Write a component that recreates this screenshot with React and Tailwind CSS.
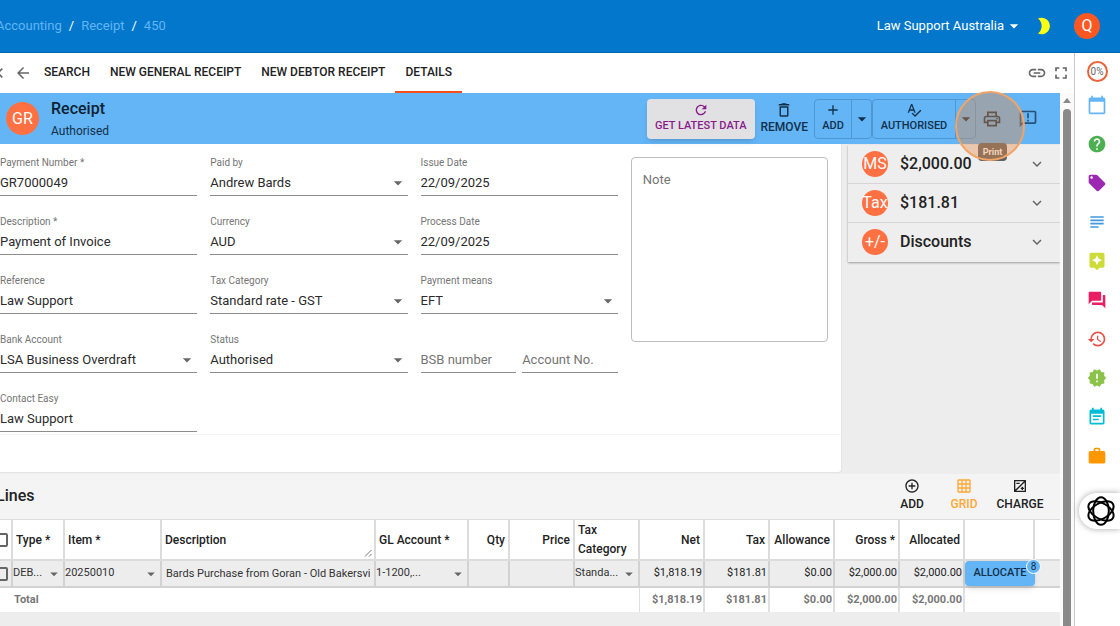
import React from 'react';
import {
    MdAdd,
    MdAddCircleOutline,
    MdArrowBack,
    MdArrowDropDown,
    MdAssistant,
    MdCalendarToday,
    MdChevronLeft,
    MdEventNote,
    MdExpandMore,
    MdForum,
    MdFullscreen,
    MdGridOn,
    MdHelp,
    MdHistory,
    MdLink,
    MdLocalOffer,
    MdNewReleases,
    MdOutlineAnnouncement,
    MdOutlineDelete,
    MdOutlinePrint,
    MdRefresh,
    MdSpellcheck,
    MdSubject,
    MdWork,
} from 'react-icons/md';

const tabs = ['Search', 'New General Receipt', 'New Debtor Receipt', 'Details'];

const summary = [
    { badge: 'MS', title: '$2,000.00' },
    { badge: 'Tax', title: '$181.81' },
    { badge: '+/-', title: 'Discounts' },
];

const railLinks = [
    { name: 'Calendar', icon: MdCalendarToday, color: 'text-[#64b5f6]' },
    { name: 'Help', icon: MdHelp, color: 'text-[#4caf50]' },
    { name: 'Tags', icon: MdLocalOffer, color: 'text-[#9c27b0]' },
    { name: 'Notes', icon: MdSubject, color: 'text-[#4299dd]' },
    { name: 'Assistant', icon: MdAssistant, color: 'text-[#cddc39]' },
    { name: 'Messages', icon: MdForum, color: 'text-[#e91e63]' },
    { name: 'History', icon: MdHistory, color: 'text-[#ea4f45]' },
    { name: 'Releases', icon: MdNewReleases, color: 'text-[#8bc34a]' },
    { name: 'Events', icon: MdEventNote, color: 'text-[#00bcd4]' },
    { name: 'Work', icon: MdWork, color: 'text-[#ff9800]' },
];

const amounts = [
    { label: 'Net', value: '$1,818.19' },
    { label: 'Tax', value: '$181.81' },
    { label: 'Allowance', value: '$0.00' },
    { label: 'Gross *', value: '$2,000.00' },
    { label: 'Allocated', value: '$2,000.00' },
];

const TextField = ({ id, label, value }) => (
    <div className="flex h-[59px] flex-col">
        <label htmlFor={id} className="h-4 text-[10px] leading-4 text-[#757575]">{label}</label>
        <input
            id={id}
            defaultValue={value}
            className="h-[25px] w-full border-b border-[#8c8c8c] bg-transparent pb-0.5 text-[13px] text-[#2b2b2b] outline-none"
        />
    </div>
);

const SelectField = ({ id, label, value }) => (
    <div className="flex h-[59px] flex-col">
        <label htmlFor={id} className="h-4 text-[10px] leading-4 text-[#757575]">{label}</label>
        <div className="relative">
            <select
                id={id}
                className="block h-[25px] w-full appearance-none border-b border-[#8c8c8c] bg-transparent pr-6 text-[13px] text-[#2b2b2b] outline-none"
            >
                <option>{value}</option>
            </select>
            <MdArrowDropDown className="pointer-events-none absolute top-0.5 right-0 size-5 text-[#666]" />
        </div>
    </div>
);

const EmptyField = ({ label }) => (
    <input
        aria-label={label}
        placeholder={label}
        className="mt-4 h-[25px] w-full min-w-0 border-b border-[#8c8c8c] bg-transparent pb-0.5 text-[13px] outline-none placeholder:text-[#757575]"
    />
);

const CellSelect = ({ label, value }) => (
    <div className="relative">
        <select
            aria-label={label}
            className="block h-[25px] w-full appearance-none truncate bg-transparent pr-4 text-[11px] text-[#333] outline-none"
        >
            <option>{value}</option>
        </select>
        <MdArrowDropDown className="pointer-events-none absolute top-1 right-0 size-4.5 text-[#666]" />
    </div>
);

const RowCheckbox = ({ label }) => (
    <input
        type="checkbox"
        aria-label={label}
        className="-ml-1.5 block size-[14px] appearance-none rounded-xs border-2 border-[#666] bg-transparent"
    />
);

const TopBar = () => (
    <header className="flex h-[53px] shrink-0 items-center justify-between border-b border-[#0567ae] bg-[#0277cb] pr-5 text-[13px]">
        <nav className="-ml-1 flex gap-[7px] text-[#64b5f6]">
            <a href="#accounting">Accounting</a>
            <span className="text-white">/</span>
            <a href="#receipt">Receipt</a>
            <span className="text-white">/</span>
            <a href="#450">450</a>
        </nav>
        <div className="flex items-center">
            <button type="button" className="flex items-center text-white">
                Law Support Australia
                <MdArrowDropDown className="size-5" />
            </button>
            <button type="button" aria-label="Dark mode" className="ml-3">
                <svg className="h-[18px] w-4" viewBox="0 0 16 18">
                    <path d="M2 1.500 A8.300 8.300 0 1 1 2 16.500 A9.500 9.500 0 0 0 2 1.500 Z" fill="#ffff14" />
                </svg>
            </button>
            <button type="button" className="ml-5.5 size-[26px] rounded-full bg-[#ff5722] text-base text-white">Q</button>
        </div>
    </header>
);

const TabBar = () => (
    <div className="flex h-10 shrink-0 items-center bg-white pr-[3px] text-[#666]">
        <MdChevronLeft className="-ml-2.5 size-5" />
        <button type="button" aria-label="Back" className="mr-0.5 ml-1"><MdArrowBack className="size-[18px]" /></button>
        <nav className="flex h-full flex-1 text-xs font-medium text-[#222] uppercase">
            {tabs.map((tab) => (
                <a
                    key={tab}
                    href={`#${tab}`}
                    className={`flex items-center border-b-2 px-2.5 ${tab === 'Details' ? 'border-[#f4511e]' : 'border-transparent'}`}
                >
                    {tab}
                </a>
            ))}
        </nav>
        <button type="button" aria-label="Copy link" className="mr-1"><MdLink className="size-5" /></button>
        <button type="button" aria-label="Full screen"><MdFullscreen className="size-5" /></button>
    </div>
);

const action = 'flex flex-col items-center justify-center pb-0.5 leading-4 font-medium uppercase';

const TitleBar = () => (
    <div className="relative z-10 flex h-[51px] shrink-0 items-center bg-[#64b5f6] text-[#12304a]">
        <div className="ml-1.5 flex size-[33px] items-center justify-center rounded-full bg-[#ff7043] text-base text-white">GR</div>
        <div className="ml-3 flex-1">
            <h1 className="text-base leading-5 font-medium text-[#0d2233]">Receipt</h1>
            <p className="mt-1 text-xs leading-4">Authorised</p>
        </div>
        <button type="button" className={`${action} h-10 rounded-sm bg-[#e1e1e3] px-2 text-[11px] text-[#8a1a8a] shadow-md`}>
            <MdRefresh className="size-4" />
            Get Latest Data
        </button>
        <button type="button" className={`${action} mx-1.5 h-10 text-xs`}>
            <MdOutlineDelete className="size-[18px]" />
            Remove
        </button>
        <div className="flex h-10 rounded-sm border border-[#4f97d3]">
            <button type="button" className={`${action} w-9 text-[11px]`}>
                <MdAdd className="size-4" />
                Add
            </button>
            <button type="button" aria-label="More ways to add" className="flex w-5 items-center justify-center border-l border-[#4f97d3]">
                <MdArrowDropDown className="size-5 shrink-0" />
            </button>
        </div>
        <div className="flex h-10 rounded-sm border border-[#4f97d3]">
            <button type="button" className={`${action} w-[82px] text-[11px]`}>
                <MdSpellcheck className="size-4" />
                Authorised
            </button>
            <button type="button" aria-label="More statuses" className="flex w-5 items-center justify-center border-l border-[#4f97d3]">
                <MdArrowDropDown className="size-5 shrink-0" />
            </button>
        </div>
        <div className="relative z-10 ml-1.5">
            <button type="button" aria-label="Print" className="flex size-5 items-center justify-center">
                <MdOutlinePrint className="size-5" />
            </button>
            <span role="tooltip" className="absolute top-[34px] -left-1 w-[29px] rounded-sm bg-[#616161] text-center text-[9px] leading-[18px] font-bold text-white">
                Print
            </span>
            <span className="pointer-events-none absolute -top-[18px] -left-[27px] size-[70px] rounded-full border-2 border-[#f0a468] bg-[rgba(230,143,76,0.4)]"></span>
        </div>
        <button type="button" aria-label="Feedback" className="mr-5.5 ml-4 text-[#265077]"><MdOutlineAnnouncement className="size-5" /></button>
    </div>
);

const ReceiptForm = () => (
    <form className="min-w-0 flex-1 rounded-br-sm border-r border-b border-[#e4e4e4] bg-white">
        <div className="grid grid-cols-4 gap-x-[13px] border-b border-[#f5f5f5] pt-[11px] pr-[13px]">
            <div>
                <TextField id="number" label="Payment Number *" value="GR7000049" />
                <TextField id="description" label="Description *" value="Payment of Invoice" />
                <TextField id="reference" label="Reference" value="Law Support" />
                <SelectField id="bank" label="Bank Account" value="LSA Business Overdraft" />
                <div className="-mb-4">
                    <TextField id="contact" label="Contact Easy" value="Law Support" />
                </div>
            </div>
            <div>
                <SelectField id="paidBy" label="Paid by" value="Andrew Bards" />
                <SelectField id="currency" label="Currency" value="AUD" />
                <SelectField id="taxCategory" label="Tax Category" value="Standard rate - GST" />
                <SelectField id="status" label="Status" value="Authorised" />
            </div>
            <div>
                <TextField id="issueDate" label="Issue Date" value="22/09/2025" />
                <TextField id="processDate" label="Process Date" value="22/09/2025" />
                <SelectField id="means" label="Payment means" value="EFT" />
                <div className="flex gap-1.5">
                    <EmptyField label="BSB number" />
                    <EmptyField label="Account No." />
                </div>
            </div>
            <textarea
                aria-label="Note"
                placeholder="Note"
                className="mt-0.5 h-[185px] resize-none rounded-sm border border-[#bdbdbd] px-[11px] py-3 text-[13px] outline-none placeholder:text-[#757575]"
            />
        </div>
    </form>
);

const Summary = () => (
    <aside className="w-[218px] shrink-0 pt-px pl-1.5">
        <div className="shadow-[0_1px_2px_rgba(0,0,0,0.35)]">
            {summary.map((item) => (
                <button
                    key={item.badge}
                    type="button"
                    className="flex h-[39px] w-full items-center border-b border-[#d5d5d5] bg-[#eee] px-3.5 text-base font-medium text-[#222] last:border-transparent"
                >
                    <span className="flex size-[26px] items-center justify-center rounded-full bg-[#ff7043] font-normal text-white">{item.badge}</span>
                    <span className="ml-3 flex-1 text-left">{item.title}</span>
                    <MdExpandMore className="size-[18px] text-[#666]" />
                </button>
            ))}
        </div>
    </aside>
);

const headCell = 'border-r-2 border-b-2 border-[#dcdcdc] px-[3px] font-medium';
const bodyCell = 'border-r-2 border-b-2 border-[#d2d2d2]';

const Lines = () => (
    <section className="bg-[#f4f4f4]">
        <div className="flex h-[46px] items-center border-t border-[#eee] pb-0.5 text-[#222]">
            <h2 className="-ml-1 flex-1 text-base font-medium">Lines</h2>
            <button type="button" className={`${action} w-[52px] text-xs`}>
                <MdAddCircleOutline className="mb-0.5 size-4" />
                Add
            </button>
            <button type="button" className={`${action} w-[52px] text-xs text-[#ffa733]`}>
                <MdGridOn className="mb-0.5 size-4" />
                Grid
            </button>
            <button type="button" className={`${action} mr-2.5 w-[60px] text-xs`}>
                <svg className="mb-0.5 size-4" viewBox="0 0 24 24" fill="none" stroke="currentColor" strokeWidth="2">
                    <path d="M4 4 H20 V20 H4 Z M4 20 L20 4 M6.500 8 H11.500 M15.500 13 V18 M13 15.500 H18" />
                </svg>
                Charge
            </button>
        </div>
        <table className="w-full table-fixed border-separate border-spacing-0 border-t border-[#dcdcdc] bg-white text-[11px] text-[#222]">
            <colgroup>
                <col className="w-[13px]" />
                <col className="w-[52px]" />
                <col className="w-[97px]" />
                <col />
                <col className="w-[93px]" />
                <col className="w-[41px]" />
                <col className="w-[65px]" />
                <col className="w-[65px]" />
                <col className="w-[65px]" />
                <col className="w-[65px]" />
                <col className="w-[65px]" />
                <col className="w-[65px]" />
                <col className="w-[65px]" />
                <col className="w-[70px]" />
                <col className="w-[25px]" />
            </colgroup>
            <thead>
                <tr className="h-[41px] text-left text-xs">
                    <th className="border-r-2 border-b-2 border-[#dcdcdc]"><RowCheckbox label="Select all" /></th>
                    <th className={headCell}>Type *</th>
                    <th className={headCell}>Item *</th>
                    <th className={`${headCell} relative`}>
                        Description
                        <svg className="absolute right-0.5 bottom-0.5 size-2" viewBox="0 0 8 8" stroke="#777" strokeWidth="1">
                            <path d="M1 7.500 L7.500 1 M5 7.500 L7.500 5" />
                        </svg>
                    </th>
                    <th className={headCell}>GL Account *</th>
                    <th className={`${headCell} text-right`}>Qty</th>
                    <th className={`${headCell} text-right`}>Price</th>
                    <th className={`${headCell} leading-[19px]`}>Tax Category</th>
                    {amounts.map((item) => (
                        <th key={item.label} className={`${headCell} text-right`}>{item.label}</th>
                    ))}
                    <th className={headCell}></th>
                    <th className="border-b-2 border-[#dcdcdc]"></th>
                </tr>
            </thead>
            <tbody>
                <tr className="h-[27px] bg-[#ededed]">
                    <td className={bodyCell}><RowCheckbox label="Select line" /></td>
                    <td className={bodyCell}><CellSelect label="Type" value="DEB..." /></td>
                    <td className={bodyCell}><CellSelect label="Item" value="20250010" /></td>
                    <td className={bodyCell}>
                        <input
                            aria-label="Description"
                            defaultValue="Bards Purchase from Goran - Old Bakersville"
                            className="block h-[25px] w-full border-x-4 border-transparent bg-transparent text-[11px] text-[#333] outline-none"
                        />
                    </td>
                    <td className={bodyCell}><CellSelect label="GL Account" value="1-1200,..." /></td>
                    <td className={bodyCell}></td>
                    <td className={bodyCell}></td>
                    <td className={bodyCell}><CellSelect label="Tax Category" value="Standa..." /></td>
                    {amounts.map((item) => (
                        <td key={item.label} className={`${bodyCell} pr-px text-right`}>{item.value}</td>
                    ))}
                    <td className="border-b-2 border-[#d2d2d2]">
                        <div className="relative">
                            <button type="button" className="block h-[25px] w-full rounded-sm bg-[#64b5f6] font-medium text-[#12304a] shadow-md">
                                ALLOCATE
                            </button>
                            <span className="absolute -top-0.5 -right-1.5 size-[15px] rounded-full border border-white bg-[#64b5f6] text-center text-[10px] leading-[13px] text-[#12304a]">
                                8
                            </span>
                        </div>
                    </td>
                    <td className="border-b-2 border-[#d2d2d2]"></td>
                </tr>
            </tbody>
            <tfoot>
                <tr className="h-6 font-bold text-[#777]">
                    <td></td>
                    <td colSpan={7} className="border-r border-[#e0e0e0] pl-px">Total</td>
                    {amounts.map((item) => (
                        <td key={item.label} className="border-r-2 border-[#e0e0e0] pr-px text-right">{item.value}</td>
                    ))}
                    <td></td>
                    <td></td>
                </tr>
            </tfoot>
        </table>
    </section>
);

const Rail = () => (
    <aside className="relative flex w-[46px] shrink-0 flex-col items-center border-l border-[#c8c8c8] bg-white pt-2 pr-px">
        <div className="mb-[3px] flex size-[21px] items-center justify-center rounded-full border-2 border-[#e8623a] text-[10px] text-[#666]">0%</div>
        {railLinks.map(({ name, icon: Icon, color }) => (
            <a key={name} href={`#${name}`} aria-label={name} className={`flex h-[39px] items-center ${color}`}>
                <Icon className="size-5" />
            </a>
        ))}
        <button
            type="button"
            aria-label="Open chat"
            className="absolute top-[440px] right-0 z-10 flex h-9 w-[41px] items-center justify-end rounded-l-full bg-white pr-1 shadow-[0_0_6px_rgba(0,0,0,0.35)]"
        >
            <svg className="size-[30px]" viewBox="0 0 30 30" fill="none" stroke="#000" strokeWidth="2">
                <ellipse cx="15" cy="15" rx="13.800" ry="7.800" transform="rotate(30 15 15)" />
                <ellipse cx="15" cy="15" rx="13.800" ry="7.800" transform="rotate(90 15 15)" />
                <ellipse cx="15" cy="15" rx="13.800" ry="7.800" transform="rotate(150 15 15)" />
            </svg>
        </button>
    </aside>
);

const App = () => {
    return (
        <div className="flex h-screen flex-col overflow-hidden bg-[#ededed] font-[Roboto,sans-serif]">
            <TopBar />
            <div className="flex min-h-0 flex-1">
                <main className="flex min-w-0 flex-1 flex-col">
                    <TabBar />
                    <div className="flex min-h-0 flex-1">
                        <div className="min-w-0 flex-1">
                            <TitleBar />
                            <div className="flex min-h-[329px]">
                                <ReceiptForm />
                                <Summary />
                            </div>
                            <Lines />
                        </div>
                        {/* Scrollbar */}
                        <div className="flex w-[14px] shrink-0 flex-col items-center bg-[#fafafa] pt-1">
                            <svg className="mb-1 h-2 w-2" viewBox="0 0 8 8"><path d="M0 6 L4 1 L8 6 Z" fill="#888" /></svg>
                            <div className="w-2 flex-1 rounded-t-full bg-[#8a8a8a]"></div>
                        </div>
                    </div>
                </main>
                <Rail />
            </div>
        </div>
    );
};

export default App;
